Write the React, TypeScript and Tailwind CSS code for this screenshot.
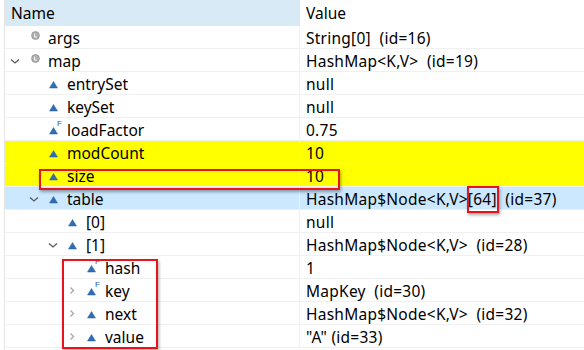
import React from 'react';
import clsx from 'clsx';

type Kind = 'local' | 'field' | 'final';
type Expand = 'open' | 'closed' | 'none';

interface Row {
  name: string;
  value: string;
  level: number;
  kind: Kind;
  expand: Expand;
  tone?: 'yellow' | 'selected';
}

const rows: Row[] = [
  { name: 'args', value: 'String[0]  (id=16)', level: 0, kind: 'local', expand: 'none' },
  { name: 'map', value: 'HashMap<K,V>  (id=19)', level: 0, kind: 'local', expand: 'open' },
  { name: 'entrySet', value: 'null', level: 1, kind: 'field', expand: 'none' },
  { name: 'keySet', value: 'null', level: 1, kind: 'field', expand: 'none' },
  { name: 'loadFactor', value: '0.75', level: 1, kind: 'final', expand: 'none' },
  { name: 'modCount', value: '10', level: 1, kind: 'field', expand: 'none', tone: 'yellow' },
  { name: 'size', value: '10', level: 1, kind: 'field', expand: 'none', tone: 'yellow' },
  { name: 'table', value: 'HashMap$Node<K,V>[64]  (id=37)', level: 1, kind: 'field', expand: 'open', tone: 'selected' },
  { name: '[0]', value: 'null', level: 2, kind: 'field', expand: 'none' },
  { name: '[1]', value: 'HashMap$Node<K,V>  (id=28)', level: 2, kind: 'field', expand: 'open' },
  { name: 'hash', value: '1', level: 3, kind: 'final', expand: 'none' },
  { name: 'key', value: 'MapKey  (id=30)', level: 3, kind: 'final', expand: 'closed' },
  { name: 'next', value: 'HashMap$Node<K,V>  (id=32)', level: 3, kind: 'field', expand: 'closed' },
  { name: 'value', value: '"A" (id=33)', level: 3, kind: 'field', expand: 'closed' },
];

function Chevron({ expand }: { expand: Expand }) {
  if (expand === 'none') return <span className="w-4 shrink-0" />;
  return (
    <svg width="16" height="16" viewBox="0 0 16 16" className="shrink-0">
      {expand === 'open' ? (
        <path d="M4 7.5 L8 11 L12 7.5" fill="none" stroke="#5a5a5a" strokeWidth="1.3" />
      ) : (
        <path d="M6.5 5.5 L9.5 8.5 L6.5 11.5" fill="none" stroke="#a6a6a6" strokeWidth="1.3" />
      )}
    </svg>
  );
}

function VarIcon({ kind }: { kind: Kind }) {
  return (
    <span className="relative ml-[6px] flex h-[22px] w-[14px] shrink-0 items-center">
      <svg width="14" height="14" viewBox="0 0 14 14">
        {kind === 'local' ? (
          <>
            <circle cx="6.5" cy="5.5" r="3.9" fill="#b0b0b0" stroke="#8f8f8f" strokeWidth="0.8" />
            <path d="M5.6 3.7 V7.1 H7.9" fill="none" stroke="#f7f7f7" strokeWidth="1" />
          </>
        ) : (
          <polygon points="1.5,12 5.5,5.5 9.5,12" fill="#2f6db4" stroke="#2a5f9e" strokeWidth="0.5" />
        )}
      </svg>
      {kind === 'final' && (
        <span className="absolute left-[9px] top-[2px] text-[8px] leading-none text-[#25589a] [font-family:'Liberation_Sans',sans-serif]">
          F
        </span>
      )}
    </span>
  );
}

function TreeRow({ row }: { row: Row }) {
  return (
    <div
      className={clsx(
        'flex h-[23px] border-b border-[#f0f0f0]',
        row.tone === 'yellow' && 'bg-[#ffff00]',
        row.tone === 'selected' && 'bg-[#cce8ff]'
      )}
    >
      <div className="flex w-[295px] shrink-0 items-center border-r border-[#f0f0f0] pl-[2px]">
        <span className="shrink-0" style={{ width: row.level * 19 }} />
        <Chevron expand={row.expand} />
        <VarIcon kind={row.kind} />
        <span className="ml-[5px] mt-[3px] whitespace-pre">{row.name}</span>
      </div>
      <div className="flex flex-1 items-center pl-[6px]">
        <span className="mt-[3px] whitespace-pre tracking-[0.25px]">{row.value}</span>
      </div>
    </div>
  );
}

export default function App() {
  return (
    <div className="relative h-[350px] w-[584px] overflow-hidden bg-white pl-[4px] text-[15.5px] text-black [font-family:'Noto_Sans',sans-serif]">
      <div className="h-full border-l border-[#e6e6e6]">
        <div className="flex h-[26px]">
          <div className="flex w-[295px] shrink-0 items-center bg-[#d9eaf7] pl-[6px]">
            <span className="mt-[2px]">Name</span>
          </div>
          <div className="flex flex-1 items-center pl-[6px]">
            <span className="mt-[2px]">Value</span>
          </div>
        </div>
        {rows.map((r) => (
          <TreeRow key={r.name} row={r} />
        ))}
      </div>

      {/* red annotation boxes */}
      <div className="pointer-events-none absolute left-[39px] top-[169px] h-[21px] w-[301px] border-2 border-[#e8141c] shadow-[1px_2px_3px_rgba(0,0,0,0.35)]" />
      <div className="pointer-events-none absolute left-[467px] top-[186px] h-[27px] w-[32px] border-2 border-[#e8141c] shadow-[1px_2px_3px_rgba(0,0,0,0.35)]" />
      <div className="pointer-events-none absolute left-[62px] top-[259px] h-[90px] w-[96px] border-2 border-[#e8141c] shadow-[1px_2px_3px_rgba(0,0,0,0.35)]" />
    </div>
  );
}
